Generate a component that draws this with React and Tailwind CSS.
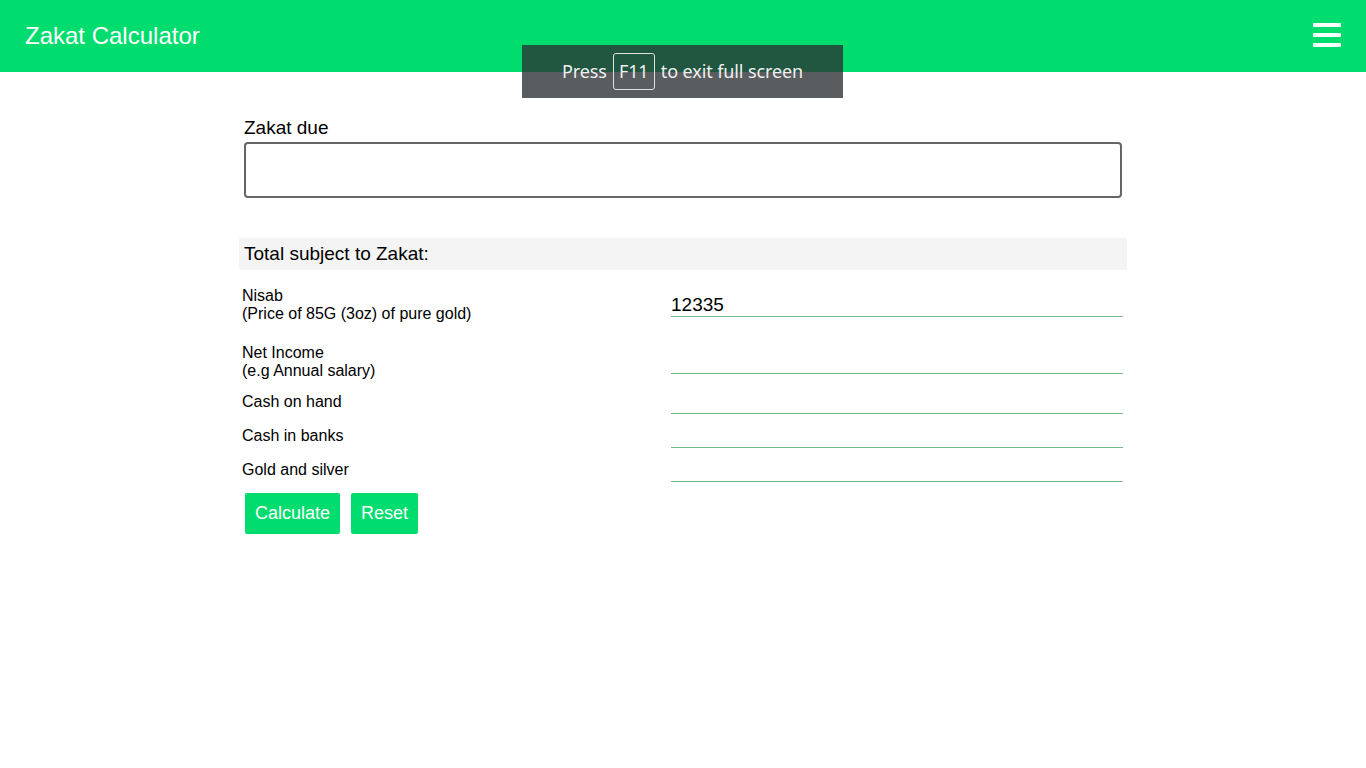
import React from 'react';

const rows = [
  { label: ['Nisab', '(Price of 85G (3oz) of pure gold)'], value: '12335', mb: 'mb-[21px]' },
  { label: ['Net Income', '(e.g Annual salary)'], value: '', mb: 'mb-[9px]' },
  { label: ['Cash on hand'], value: '', mb: 'mb-[8px]' },
  { label: ['Cash in banks'], value: '', mb: 'mb-[8px]' },
  { label: ['Gold and silver'], value: '', mb: 'mb-[11px]' },
];

export default function App() {
  return (
    <div className="min-h-[768px] bg-white font-['Liberation_Sans',Arial,sans-serif] text-black relative">
      {/* Header */}
      <header className="h-[72px] bg-[#00dd6e] flex items-center justify-between px-[25px]">
        <h1 className="text-[24px] text-white leading-none">Zakat Calculator</h1>
        <button className="flex flex-col gap-[6px] w-[28px] mt-[-2px]">
          <span className="h-[4px] w-[28px] bg-white rounded-[1px]"></span>
          <span className="h-[4px] w-[28px] bg-white rounded-[1px]"></span>
          <span className="h-[4px] w-[28px] bg-white rounded-[1px]"></span>
        </button>
      </header>

      {/* Fullscreen notice */}
      <div className="absolute left-[522px] top-[45px] w-[321px] h-[53px] bg-[rgba(42,48,51,0.78)] flex items-center justify-center gap-[6px] text-[18px] tracking-[-0.1px] text-[#f0f0f0] font-['Noto_Sans',sans-serif]">
        <span>Press</span>
        <span className="border border-[#e0e0e0] rounded-[3px] h-[37px] w-[42px] flex items-center justify-center">F11</span>
        <span>to exit full screen</span>
      </div>

      <main className="w-[888px] mx-auto">
        <div className="px-[5px] pt-[45px]">
          <label className="block text-[19px] leading-[22px] mb-[3px]">Zakat due</label>
          <input
            readOnly
            className="block w-full h-[56px] border-2 border-[#666] rounded-[4px] outline-none px-2 text-[19px]"
          />
        </div>

        <div className="mt-[40px] h-[32px] bg-[#f4f4f4] px-[5px] flex items-center text-[19px] pt-[1px]">
          Total subject to Zakat:
        </div>

        <div className="pt-[16px] pl-[3px] pr-[4px]">
          {rows.map((row, i) => (
            <div key={i} className={`flex items-center ${row.mb}`}>
              <div className="w-[429px] text-[16px] leading-[18px] pt-[1px] mb-[-1px]">
                {row.label.map((l, j) => (
                  <div key={j}>{l}</div>
                ))}
              </div>
              <input
                defaultValue={row.value}
                className="flex-1 h-[26px] border-b border-[#79b68a] outline-none text-[19px] leading-none p-0 pt-[2px]"
              />
            </div>
          ))}

          <div className="flex gap-[11px] pl-[3px]">
            <button className="h-[41px] px-[10px] bg-[#00dd6e] text-white text-[18px] rounded-[2px]">Calculate</button>
            <button className="h-[41px] px-[10px] bg-[#00dd6e] text-white text-[18px] rounded-[2px]">Reset</button>
          </div>
        </div>
      </main>
    </div>
  );
}
